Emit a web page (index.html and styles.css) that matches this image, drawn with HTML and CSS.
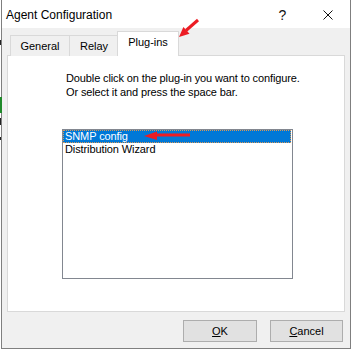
FILE: index.html
```html
<!DOCTYPE html>
<html>
<head>
<meta charset="utf-8">
<link rel="stylesheet" href="styles.css">
</head>
<body>
<div class="window">
  <div class="titlebar">
    <div class="title">Agent Configuration</div>
    <div class="capbtn help">?</div>
    <div class="capbtn close">
      <svg width="10" height="10" viewBox="0 0 10 10"><path d="M0.5 0.5 L9.5 9.5 M9.5 0.5 L0.5 9.5" stroke="#111" stroke-width="1" fill="none"/></svg>
    </div>
  </div>
  <div class="content">
    <div class="tabs">
      <div class="tab t-general">General</div>
      <div class="tab t-relay">Relay</div>
      <div class="tab t-plugins selected">Plug-ins</div>
    </div>
    <div class="panel">
      <div class="intro">
        <div>Double click on the plug-in you want to configure.</div>
        <div>Or select it and press the space bar.</div>
      </div>
      <div class="listbox">
        <div class="item sel">SNMP config</div>
        <div class="item">Distribution Wizard</div>
      </div>
    </div>
    <div class="buttons">
      <div class="btn ok"><u>O</u>K</div>
      <div class="btn cancel"><u>C</u>ancel</div>
    </div>
  </div>
</div>
<svg class="overlay" width="354" height="352" viewBox="0 0 354 352">
  <rect x="0" y="97" width="2" height="16" fill="#1f8a2a"/>
  <rect x="0" y="118" width="1" height="7" fill="#222"/>
  <rect x="0" y="40" width="1" height="5" fill="#222"/>
  <rect x="0" y="137" width="1" height="3" fill="#222"/>
  <line x1="186" y1="30.5" x2="198" y2="20" stroke="#ec1c24" stroke-width="3"/>
  <polygon points="179,37 189.5,33.7 183.4,27" fill="#ec1c24"/>
  <line x1="155" y1="135" x2="190" y2="135" stroke="#ec1c24" stroke-width="3"/>
  <polygon points="144,136 157,131.5 157,140" fill="#ec1c24"/>
</svg>
</body>
</html>
```
FILE: styles.css
```css
html, body {
  margin: 0;
  padding: 0;
  background: #ffffff;
}
body {
  width: 354px;
  height: 352px;
  position: relative;
  overflow: hidden;
  font-family: "Liberation Sans", Arial, sans-serif;
  font-size: 11px;
  color: #000;
}
.window {
  margin-left: 1px;
  width: 350px;
  height: 349px;
  box-sizing: border-box;
  border-left: 1px solid #7f7f7f;
  border-right: 1px solid #7f7f7f;
  border-bottom: 1px solid #7f7f7f;
  display: flex;
  flex-direction: column;
}
.titlebar {
  height: 28px;
  background: #ffffff;
  display: flex;
  align-items: stretch;
}
.title {
  flex: 1;
  font-size: 12px;
  padding-left: 4px;
  padding-top: 2px;
  line-height: 26px;
  color: #000;
}
.capbtn {
  width: 45px;
  display: flex;
  align-items: center;
  justify-content: center;
}
.help {
  font-size: 14px;
  padding-top: 1px;
  color: #111;
}
.close svg {
  display: block;
  margin-top: 2px;
}
.content {
  flex: 1;
  background: #f0f0f0;
  padding-top: 3px;
  padding-left: 5px;
}
.tabs {
  height: 25px;
  display: flex;
  align-items: flex-end;
  padding-left: 3px;
}
.tab {
  box-sizing: border-box;
  height: 21px;
  line-height: 20px;
  border: 1px solid #d9d9d9;
  border-bottom: none;
  background: #f0f0f0;
  text-align: center;
}
.t-general { width: 60px; }
.t-relay { width: 50px; margin-left: -1px; }
.t-plugins { width: 62px; margin-left: -2px; }
.tab.selected {
  height: 25px;
  line-height: 20px;
  background: #ffffff;
  position: relative;
  z-index: 1;
}
.panel {
  margin-top: -1px;
  width: 338px;
  height: 257px;
  box-sizing: border-box;
  border: 1px solid #d9d9d9;
  background: #ffffff;
  padding-top: 15px;
  padding-left: 54px;
}
.intro {
  padding-left: 4px;
  line-height: 14px;
  letter-spacing: -0.12px;
}
.listbox {
  margin-top: 30px;
  width: 231px;
  height: 150px;
  box-sizing: border-box;
  border: 1px solid #828790;
  background: #fff;
}
.item {
  height: 13px;
  line-height: 13px;
  padding-left: 2px;
  white-space: nowrap;
  letter-spacing: -0.1px;
}
.item.sel {
  background: #0078d7;
  color: #ffffff;
  outline: 1px dotted #d89858;
  outline-offset: -1px;
  margin-right: 1px;
}
.buttons {
  margin-top: 8px;
  display: flex;
  justify-content: flex-end;
  gap: 13px;
  padding-right: 7px;
}
.btn {
  box-sizing: border-box;
  height: 22px;
  line-height: 20px;
  border: 1px solid #adadad;
  background: #e1e1e1;
  text-align: center;
}
.ok { width: 74px; }
.cancel { width: 73px; }
.overlay {
  position: absolute;
  left: 0;
  top: 0;
  pointer-events: none;
}
```
